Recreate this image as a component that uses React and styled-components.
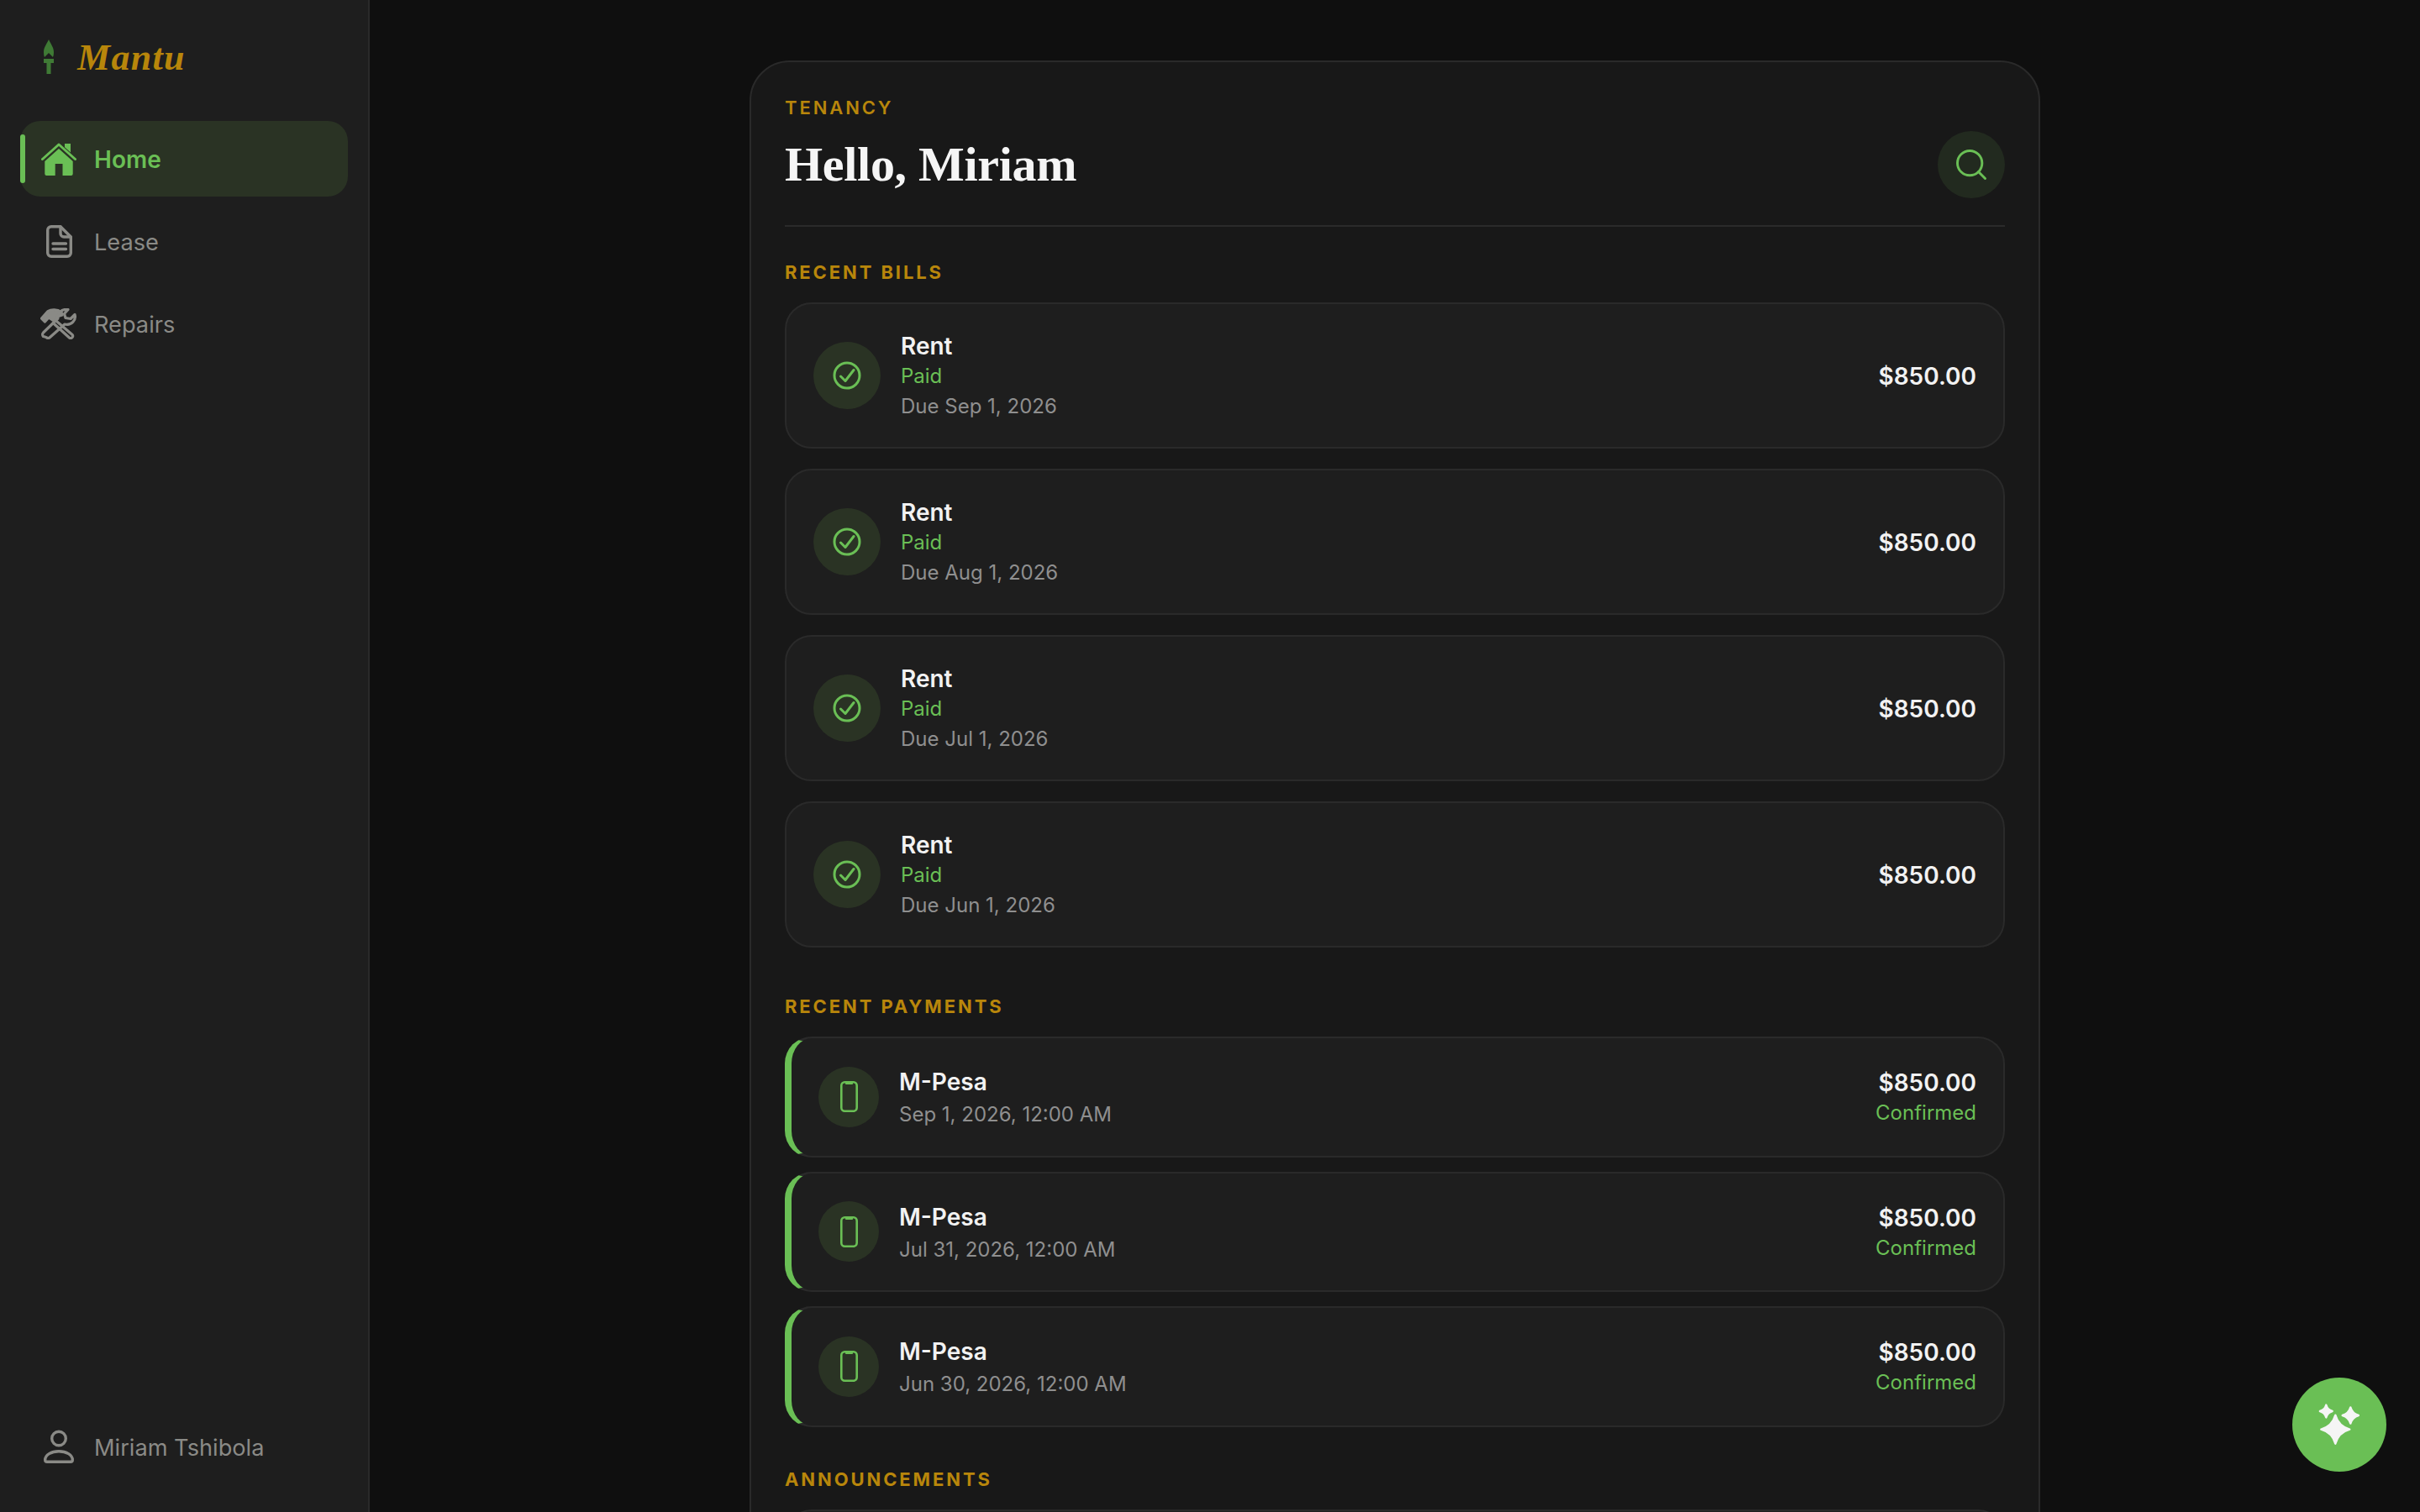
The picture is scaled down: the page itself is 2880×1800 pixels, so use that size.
import React from 'react';
import styled, { createGlobalStyle } from 'styled-components';
import { Search } from 'lucide-react';

const GREEN = '#6abf55';
const GOLD = '#b8860b';
const MUTED = '#8a8a86';

const GlobalStyle = createGlobalStyle`
  * { box-sizing: border-box; }
  html, body { margin: 0; height: 100%; background: #0f0f0f; overflow: hidden; }
  body { font-family: Inter, "Liberation Sans", sans-serif; color: #f2f2f2; }
`;

const Shell = styled.div`
  display: flex;
  height: 1800px;
  overflow: hidden;
`;

// Sidebar
const Sidebar = styled.aside`
  width: 440px;
  flex-shrink: 0;
  display: flex;
  flex-direction: column;
  background: #1e1e1e;
  border-right: 2px solid #2a2a2a;
  padding: 0 24px 33px;
`;

const Brand = styled.div`
  height: 136px;
  margin-bottom: 8px;
  display: flex;
  align-items: center;
  gap: 27px;
  padding-left: 27px;
`;

const BrandName = styled.span`
  font-family: "Liberation Serif", serif;
  font-weight: 700;
  font-style: italic;
  font-size: 44px;
  letter-spacing: 1.3px;
  color: ${GOLD};
`;

const Nav = styled.nav`
  display: flex;
  flex-direction: column;
  gap: 8px;
`;

const NavItem = styled.a`
  position: relative;
  height: 90px;
  display: flex;
  align-items: center;
  padding-left: 24px;
  gap: 20px;
  border-radius: 24px;
  font-size: ${p => (p.$active ? 28 : 27.2)}px;
  font-weight: ${p => (p.$active ? 600 : 400)};
  color: ${p => (p.$active ? GREEN : MUTED)};
  background: ${p => (p.$active ? '#2a3324' : 'transparent')};

  ${p => p.$active && `
    &::before {
      content: '';
      position: absolute;
      left: 0;
      top: 16px;
      bottom: 16px;
      width: 6px;
      border-radius: 3px;
      background: ${GREEN};
    }
  `}
`;

const NavIcon = styled.span`
  width: 44px;
  height: 44px;
  display: flex;
  align-items: center;
  justify-content: center;
  flex-shrink: 0;
`;

const NavLabel = styled.span`
  padding-top: 2px;
`;

const SidebarFooter = styled(NavItem)`
  margin-top: auto;
`;

// Main column
const Main = styled.main`
  flex: 1;
  min-width: 0;
  display: flex;
  justify-content: center;
  padding-top: 72px;
`;

const Panel = styled.section`
  width: 1536px;
  height: 2400px;
  flex-shrink: 0;
  background: #181818;
  border: 2px solid #2a2a2a;
  border-radius: 48px;
  padding: 40px;
`;

const Header = styled.header`
  display: flex;
  justify-content: space-between;
  align-items: flex-end;
  padding-bottom: 32px;
  border-bottom: 2px solid #2a2a2a;
`;

const Eyebrow = styled.div`
  font-size: 22px;
  line-height: 28px;
  font-weight: 600;
  letter-spacing: 2.9px;
  text-transform: uppercase;
  color: ${GOLD};
`;

const Heading = styled.h1`
  margin: 18px 0 4px;
  font-family: "Liberation Serif", serif;
  font-size: 58px;
  line-height: 72px;
  font-weight: 700;
  letter-spacing: -0.3px;
  color: #f5f5f5;
`;

const SearchButton = styled.button`
  width: 80px;
  height: 80px;
  padding: 0;
  border: 0;
  border-radius: 50%;
  display: flex;
  align-items: center;
  justify-content: center;
  background: #222a1f;
  color: ${GREEN};
`;

const SectionLabel = styled.h2`
  margin: ${p => p.$top}px 0 22px;
  font-size: 22px;
  line-height: 28px;
  font-weight: 700;
  letter-spacing: 2.9px;
  text-transform: uppercase;
  color: ${GOLD};
`;

const Card = styled.div`
  display: flex;
  align-items: center;
  justify-content: space-between;
  height: ${p => p.$height}px;
  margin-bottom: ${p => p.$gap}px;
  padding: 0 32px;
  background: #1e1e1e;
  border: 2px solid #2a2a2a;
  border-left: ${p => (p.$accent ? `8px solid ${GREEN}` : '2px solid #2a2a2a')};
  border-radius: 32px;
`;

const CardLeft = styled.div`
  display: flex;
  align-items: center;
  gap: 24px;
`;

const IconCircle = styled.div`
  width: ${p => p.$size}px;
  height: ${p => p.$size}px;
  border-radius: 50%;
  flex-shrink: 0;
  display: flex;
  align-items: center;
  justify-content: center;
  background: #2a3324;
  color: ${GREEN};
`;

const Stack = styled.div`
  display: flex;
  flex-direction: column;
  align-items: ${p => (p.$right ? 'flex-end' : 'flex-start')};
  padding-top: ${p => p.$nudge || 0}px;
`;

const Title = styled.div`
  font-size: 28px;
  line-height: ${p => p.$line || 36}px;
  font-weight: 600;
  color: #f2f2f2;
`;

const StatusText = styled.div`
  font-size: 24px;
  line-height: 36px;
  color: ${GREEN};
`;

const MetaText = styled.div`
  font-size: 24px;
  line-height: ${p => p.$line || 36}px;
  color: #8f8f8f;
`;

const Amount = styled.div`
  font-size: 28px;
  line-height: 36px;
  font-weight: 600;
  color: #f2f2f2;
`;

const Fab = styled.button`
  position: fixed;
  right: 40px;
  bottom: 48px;
  width: 112px;
  height: 112px;
  padding: 0;
  border: 0;
  border-radius: 50%;
  display: flex;
  align-items: center;
  justify-content: center;
  background: ${GREEN};
`;

const LogoMark = () => (
  <svg width="14" height="42" viewBox="0 0 14 42" fill="#3f7a35">
    <path d="M7 0 C9 5 13 9 13 15 C13 18 12.5 20 12 21 L7 16 L2 21 C1.5 20 1 18 1 15 C1 9 5 5 7 0 Z" />
    <path d="M1 23 H13 V28 H9.5 V41 H4.5 V28 H1 Z" />
  </svg>
);

const HomeIcon = () => (
  <svg width="42" height="39" viewBox="0 0 42 39" fill={GREEN}>
    <path d="M1.5 19.5 L21 2 L40.5 19.5" fill="none" stroke={GREEN} strokeWidth="3" strokeLinecap="round" strokeLinejoin="round" />
    <path d="M21 7 L37.7 22 V37 a2 2 0 0 1 -2 2 H25.5 V25 H16.7 V39 H6.3 a2 2 0 0 1 -2 -2 V22 Z" />
    <path d="M28 1 H35 V11.5 L28 5.2 Z" />
  </svg>
);

const LeaseIcon = () => (
  <svg width="31" height="39" viewBox="0 0 31 39" fill="none" stroke={MUTED} strokeWidth="3.4" strokeLinejoin="round" strokeLinecap="round">
    <path d="M6 1.7 H17 L29.3 14 V33 a4.3 4.3 0 0 1 -4.3 4.3 H6 a4.3 4.3 0 0 1 -4.3 -4.3 V6 a4.3 4.3 0 0 1 4.3 -4.3 Z" />
    <path d="M17 2 V10 a4 4 0 0 0 4 4 H29" />
    <path d="M8 22 H23.5 M8 28.5 H23.5" />
  </svg>
);

const RepairsIcon = () => (
  <svg width="44" height="37" viewBox="0 0 44 37" fill="none" stroke={MUTED} strokeWidth="3.2" strokeLinejoin="round" strokeLinecap="round">
    <path d="M1.5 12 L9 3.5 C13 1 20 1 25 4.5 L26 8 L20 10 L18 15.5 L14.5 14 L10 11 L5.5 16 Z" fill={MUTED} />
    <path d="M18.8 15 L37.8 31.2 a2.6 2.6 0 0 1 0 3.6 a2.6 2.6 0 0 1 -3.6 0 L15.2 17.5" />
    <path d="M3.5 29 L21 12 C20 6 25 0.5 33 1.5 L28.5 6.5 L30 11.5 L36 12.5 L41 7.5 C43 14 37 21 29 19 L11.5 34.5 a3.2 3.2 0 0 1 -4.5 0 L3.5 33.5 a3.2 3.2 0 0 1 0 -4.5 Z" />
  </svg>
);

const UserIcon = () => (
  <svg width="36" height="40" viewBox="0 0 36 40" fill="none" stroke={MUTED} strokeWidth="3.4">
    <circle cx="18" cy="10.5" r="8.3" />
    <path d="M1.7 36 C1.7 30 9 25.7 18 25.7 C27 25.7 34.3 30 34.3 36 C34.3 37.3 33.3 38.3 32 38.3 H4 C2.7 38.3 1.7 37.3 1.7 36 Z" strokeLinejoin="round" />
  </svg>
);

const CheckIcon = () => (
  <svg width="36" height="36" viewBox="0 0 36 36" fill="none" stroke={GREEN} strokeWidth="3" strokeLinecap="round" strokeLinejoin="round">
    <circle cx="18" cy="18" r="15" />
    <path d="M10.5 19 L16 24.5 L26 11.5" />
  </svg>
);

const PhoneIcon = () => (
  <svg width="21" height="37" viewBox="0 0 21 37" fill="none" stroke={GREEN} strokeWidth="2.6" strokeLinejoin="round">
    <rect x="1.3" y="1.3" width="18.4" height="34.4" rx="4" />
    <path d="M6.5 2 H14.5 V3.5 H6.5 Z" fill={GREEN} strokeWidth="1" />
  </svg>
);

// Four-pointed star, cx/cy its centre, r its reach
const starPath = (cx, cy, r) => {
  const k = r * 0.22;
  return `M${cx} ${cy - r} Q${cx + k} ${cy - k} ${cx + r} ${cy} Q${cx + k} ${cy + k} ${cx} ${cy + r} Q${cx - k} ${cy + k} ${cx - r} ${cy} Q${cx - k} ${cy - k} ${cx} ${cy - r} Z`;
};

const SparkleIcon = () => (
  <svg width="56" height="56" viewBox="0 0 56 56" fill="#f5f5f5" stroke="#f5f5f5" strokeWidth="2.4" strokeLinejoin="round">
    <path d={starPath(23.3, 33.7, 17)} />
    <path d={starPath(12.3, 12, 7.4)} />
    <path d={starPath(41.3, 17, 9.6)} />
  </svg>
);

const bills = ['Due Sep 1, 2026', 'Due Aug 1, 2026', 'Due Jul 1, 2026', 'Due Jun 1, 2026'];
const payments = ['Sep 1, 2026, 12:00 AM', 'Jul 31, 2026, 12:00 AM', 'Jun 30, 2026, 12:00 AM'];

const App = () => (
  <>
    <GlobalStyle />
    <Shell>
      <Sidebar>
        <Brand>
          <LogoMark />
          <BrandName>Mantu</BrandName>
        </Brand>
        <Nav>
          <NavItem $active>
            <NavIcon><HomeIcon /></NavIcon>
            <NavLabel>Home</NavLabel>
          </NavItem>
          <NavItem>
            <NavIcon><LeaseIcon /></NavIcon>
            <NavLabel>Lease</NavLabel>
          </NavItem>
          <NavItem>
            <NavIcon><RepairsIcon /></NavIcon>
            <NavLabel>Repairs</NavLabel>
          </NavItem>
        </Nav>
        <SidebarFooter>
          <NavIcon><UserIcon /></NavIcon>
          <NavLabel>Miriam Tshibola</NavLabel>
        </SidebarFooter>
      </Sidebar>

      <Main>
        <Panel>
          <Header>
            <div>
              <Eyebrow>Tenancy</Eyebrow>
              <Heading>Hello, Miriam</Heading>
            </div>
            <SearchButton aria-label="Search">
              <Search size={44} strokeWidth={1.6} />
            </SearchButton>
          </Header>

          <SectionLabel $top={40}>Recent Bills</SectionLabel>
          {bills.map(due => (
            <Card key={due} $height={174} $gap={24}>
              <CardLeft>
                <IconCircle $size={80}><CheckIcon /></IconCircle>
                <Stack $nudge={2}>
                  <Title>Rent</Title>
                  <StatusText>Paid</StatusText>
                  <MetaText>{due}</MetaText>
                </Stack>
              </CardLeft>
              <Stack $nudge={2}>
                <Amount>$850.00</Amount>
              </Stack>
            </Card>
          ))}

          <SectionLabel $top={56}>Recent Payments</SectionLabel>
          {payments.map(date => (
            <Card key={date} $height={143.5} $gap={17} $accent>
              <CardLeft>
                <IconCircle $size={72}><PhoneIcon /></IconCircle>
                <Stack $nudge={5}>
                  <Title $line={38}>M-Pesa</Title>
                  <MetaText $line={40}>{date}</MetaText>
                </Stack>
              </CardLeft>
              <Stack $right $nudge={3}>
                <Amount>$850.00</Amount>
                <StatusText>Confirmed</StatusText>
              </Stack>
            </Card>
          ))}

          <SectionLabel $top={48}>Announcements</SectionLabel>
          <Card $height={144} $gap={16} />
        </Panel>
      </Main>

      <Fab aria-label="Assistant"><SparkleIcon /></Fab>
    </Shell>
  </>
);

export default App;
